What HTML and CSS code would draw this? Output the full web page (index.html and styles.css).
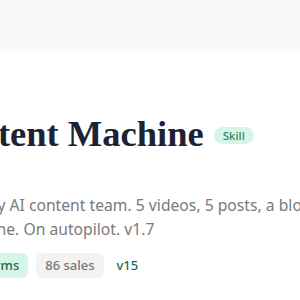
FILE: index.html
```html
<!DOCTYPE html>
<html lang="en">
<head>
  <meta charset="UTF-8"/>
  <title>Content Machine</title>
  <link rel="stylesheet" href="styles.css">
</head>
<body>
  <header class="topbar"></header>

  <main class="product">
    <div class="product-head">
      <h1 class="title">Content Machine</h1>
      <span class="badge">Skill</span>
    </div>
    <p class="desc">Your daily AI content team. 5 videos, 5 posts, a blog post and a<br>The engine. On autopilot. v1.7</p>
    <div class="tags">
      <span class="tag tag-green">AI platforms</span>
      <span class="tag tag-gray">86 sales</span>
      <span class="tag tag-plain">v15</span>
    </div>
  </main>
</body>
</html>
```

FILE: styles.css
```css
/* base */
* { margin:0; padding:0; box-sizing:border-box; }
html, body {
  width:100%; height:100%; overflow:hidden;
  background:#fff;
  font-family:"Noto Sans", sans-serif;
}

/* top bar */
.topbar {
  height:51px;
  background:#f9f9f9;
  border-bottom:2px solid #fcfcfc;
}

/* product block — left side is scrolled out of view */
.product {
  margin-left:-67px;
  padding-top:61px;
  white-space:nowrap;
}
.product-head {
  display:flex; align-items:center; gap:10px;
}
.title {
  font-family:"Liberation Serif", serif;
  font-size:36.5px; font-weight:700;
  color:#1c2433;
  line-height:44px;
}
.badge {
  background:#d6f5e6;
  color:#2b8a5e;
  font-size:11.5px; font-weight:500;
  padding:0 9px;
  line-height:17px;
  border-radius:9px;
  margin-top:2px;
}

.desc {
  margin-top:37px;
  font-size:15.7px;
  line-height:24px;
  color:#7a7a7a;
}

.tags {
  display:flex; align-items:center; gap:8px;
  margin-top:12px;
}
.tag {
  font-size:13px; font-weight:500;
  padding:3px 9px;
  border-radius:6px;
  line-height:19px;
}
.tag-green { background:#d6f5e6; color:#1f6b4c; }
.tag-gray  { background:#f3f3f3; color:#767676; }
.tag-plain { color:#1f6b4c; padding-left:5px; }
```
